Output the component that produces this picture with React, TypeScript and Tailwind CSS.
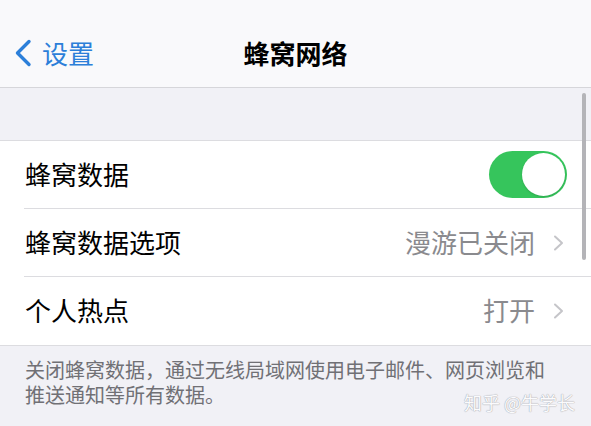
import React from "react";

const font = { fontFamily: '"Noto Sans CJK SC", "Noto Sans", sans-serif' };

function Chevron() {
  return (
    <svg width="13" height="16" viewBox="0 0 13 16" className="shrink-0">
      <path d="M3 1.5 L10 8 L3 14.5" fill="none" stroke="#c5c5c9" strokeWidth="2" strokeLinecap="round" strokeLinejoin="round" />
    </svg>
  );
}

function Row({ label, value, toggle, last }: { label: string; value?: string; toggle?: boolean; last?: boolean }) {
  return (
    <div className="pl-[24px]">
      <div className={`h-[68px] flex items-center pr-[24px] ${last ? "" : "border-b border-[#dcdce0]"}`}>
        <span className="text-[26px] leading-none text-black flex-1 pl-[1px] -mt-[2px]">{label}</span>
        {toggle ? (
          <div className="w-[78px] h-[47px] rounded-full bg-[#36c55c] flex items-center justify-end pr-[2px]">
            <div className="w-[43px] h-[43px] rounded-full bg-white shadow-[0_1px_2px_rgba(0,0,0,0.15)]" />
          </div>
        ) : (
          <div className="flex items-center gap-[17px] pr-[2px]">
            <span className="text-[26px] leading-none text-[#8a8a8e] -mt-[2px]">{value}</span>
            <Chevron />
          </div>
        )}
      </div>
    </div>
  );
}

export default function App() {
  return (
    <div className="relative w-[591px] h-[426px] overflow-hidden bg-[#f1f1f6]" style={font}>
      <div className="h-[88px] bg-[#f9f9fb] border-b border-[#d6d6da] pt-[33px]">
        <div className="grid grid-cols-[1fr_auto_1fr] items-center h-[40px]">
          <div className="flex items-center pl-[14px] gap-[10px] text-[#2c7fd9]">
            <svg width="18" height="28" viewBox="0 0 18 28">
              <path d="M15 2.5 L3.5 14 L15 25.5" fill="none" stroke="#2c7fd9" strokeWidth="3.4" strokeLinecap="round" strokeLinejoin="round" />
            </svg>
            <span className="text-[26px] leading-none">设置</span>
          </div>
          <div className="text-[26px] leading-none font-bold text-black">蜂窝网络</div>
          <div />
        </div>
      </div>
      <div className="h-[53px] border-b border-[#dcdce0]" />
      <div className="bg-white border-b border-[#dcdce0]">
        <Row label="蜂窝数据" toggle />
        <Row label="蜂窝数据选项" value="漫游已关闭" />
        <Row label="个人热点" value="打开" last />
      </div>
      <div className="px-[25px] pt-[11px] text-[20px] leading-[25px] text-[#707075]">
        <p>关闭蜂窝数据，通过无线局域网使用电子邮件、网页浏览和</p>
        <p>推送通知等所有数据。</p>
      </div>
      <div className="absolute left-[582px] top-[93px] w-[4px] h-[167px] rounded-full bg-[#b4b4b8]" />
      <div className="absolute right-[16px] top-[393px] text-[18px] leading-none text-[#fbfbfd] [text-shadow:0_0_1px_#a4a4aa,0_0_1px_#a4a4aa]">
        知乎 @牛学长
      </div>
    </div>
  );
}
